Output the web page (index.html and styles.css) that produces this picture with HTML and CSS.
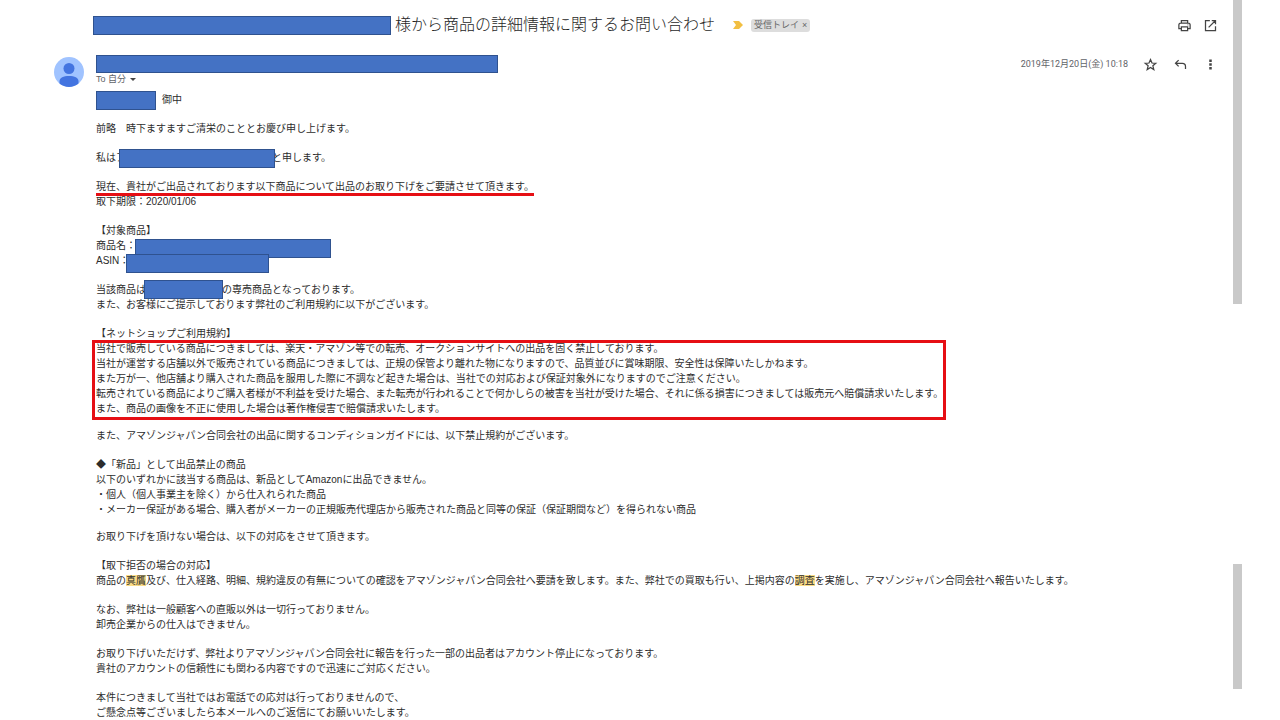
FILE: index.html
```html
<!DOCTYPE html>
<html lang="ja">
<head>
<meta charset="utf-8">
<meta name="viewport" content="width=device-width, initial-scale=1">
<title>商品の詳細情報に関するお問い合わせ</title>
<link rel="stylesheet" href="styles.css">
</head>
<body>
<div class="page">
  <main class="mail">
    <header class="subject">
      <span class="mask mask-subject"></span>
      <h1 class="subject-title">様から商品の詳細情報に関するお問い合わせ</h1>
      <svg class="marker" viewBox="0 0 10 8" aria-hidden="true"><path d="M0 0h6l4 4-4 4H0l3-4z"/></svg>
      <span class="label">受信トレイ <button class="label-close" type="button" aria-label="ラベルを削除">×</button></span>
      <div class="tools">
        <button class="icon" type="button" aria-label="印刷"><svg viewBox="0 0 24 24"><path d="M7 8V4h10v4M7 17H3v-6q0-3 3-3h12q3 0 3 3v6h-4M7 14h10v6H7z"/><path d="M17 11h1"/></svg></button>
        <button class="icon" type="button" aria-label="新しいウィンドウで開く"><svg viewBox="0 0 24 24"><path d="M11 4H4v16h16v-7M14 4h6v6M20 4L9 15"/></svg></button>
      </div>
    </header>

    <section class="sender">
      <svg class="avatar" viewBox="0 0 30 30" aria-hidden="true">
        <circle class="avatar-bg" cx="15" cy="15" r="15"/>
        <circle class="avatar-fg" cx="15" cy="11.500" r="5.500"/>
        <path class="avatar-fg" d="M5.500 26.600v-2.100c0-4 4-5.500 9.500-5.500s9.500 1.500 9.500 5.500v2.100A15 15 0 0 1 5.500 26.600z"/>
      </svg>
      <div class="sender-info">
        <span class="mask mask-sender"></span>
        <button class="recipient" type="button">To 自分 <svg class="caret" viewBox="0 0 6 3" aria-hidden="true"><path d="M0 0h6L3 3z"/></svg></button>
      </div>
      <div class="meta">
        <time datetime="2019-12-20T10:18">2019年12月20日(金) 10:18</time>
        <button class="icon" type="button" aria-label="スター"><svg viewBox="0 0 24 24"><path d="M12 4l2.400 5.600 6.100.5-4.700 4 1.500 6-5.300-3.300-5.300 3.300 1.500-6-4.700-4 6.100-.5z"/></svg></button>
        <button class="icon" type="button" aria-label="返信"><svg viewBox="0 0 24 24"><path d="M9 5L4 10l5 5M4 10h11q5 0 5 5v4"/></svg></button>
        <button class="icon" type="button" aria-label="その他"><svg viewBox="0 0 24 24"><path class="dots" d="M10 4h4v4h-4zM10 10h4v4h-4zM10 16h4v4h-4z"/></svg></button>
      </div>
    </section>

    <article class="body">
      <p><span class="mask mask-company"></span>御中</p>
      <p>前略　時下ますますご清栄のこととお慶び申し上げます。</p>
      <p>私はア<span class="mask mask-name"></span>と申します。</p>
      <p><span class="underlined">現在、貴社がご出品されております以下商品について出品のお取り下げをご要請させて頂きます。</span><br>取下期限：2020/01/06</p>
      <p>【対象商品】<br>商品名：<span class="mask mask-product"></span><br>ASIN：<span class="mask mask-asin"></span></p>
      <p>当該商品は<span class="mask mask-brand"></span>の専売商品となっております。<br>また、お客様にご提示しております弊社のご利用規約に以下がございます。</p>
      <div class="long">
        <h2>【ネットショップご利用規約】</h2>
        <div class="framed">当社で販売している商品につきましては、楽天・アマゾン等での転売、オークションサイトへの出品を固く禁止しております。<br>当社が運営する店舗以外で販売されている商品につきましては、正規の保管より離れた物になりますので、品質並びに賞味期限、安全性は保障いたしかねます。<br>また万が一、他店舗より購入された商品を服用した際に不調など起きた場合は、当社での対応および保証対象外になりますのでご注意ください。<br>転売されている商品によりご購入者様が不利益を受けた場合、また転売が行われることで何かしらの被害を当社が受けた場合、それに係る損害につきましては販売元へ賠償請求いたします。<br>また、商品の画像を不正に使用した場合は著作権侵害で賠償請求いたします。</div>
      </div>
      <p>また、アマゾンジャパン合同会社の出品に関するコンディションガイドには、以下禁止規約がございます。</p>
      <p class="long">◆「新品」として出品禁止の商品<br>以下のいずれかに該当する商品は、新品としてAmazonに出品できません。<br>・個人（個人事業主を除く）から仕入れられた商品<br>・メーカー保証がある場合、購入者がメーカーの正規販売代理店から販売された商品と同等の保証（保証期間など）を得られない商品</p>
      <p>お取り下げを頂けない場合は、以下の対応をさせて頂きます。</p>
      <p>【取下拒否の場合の対応】<br>商品の<mark>真贋</mark>及び、仕入経路、明細、規約違反の有無についての確認をアマゾンジャパン合同会社へ要請を致します。また、弊社での買取も行い、上掲内容の<mark>調査</mark>を実施し、アマゾンジャパン合同会社へ報告いたします。</p>
      <p>なお、弊社は一般顧客への直販以外は一切行っておりません。<br>卸売企業からの仕入はできません。</p>
      <p>お取り下げいただけず、弊社よりアマゾンジャパン合同会社に報告を行った一部の出品者はアカウント停止になっております。<br>貴社のアカウントの信頼性にも関わる内容ですので迅速にご対応ください。</p>
      <p>本件につきまして当社ではお電話での応対は行っておりませんので、<br>ご懸念点等ございましたら本メールへのご返信にてお願いいたします。</p>
    </article>
  </main>
  <div class="rail" aria-hidden="true">
    <span class="thumb thumb-upper"></span>
    <span class="thumb thumb-lower"></span>
  </div>
</div>
</body>
</html>
```
FILE: styles.css
```css
* {
  box-sizing: border-box;
}

body {
  margin: 0;
  background: #fff;
  color: #2c2c2c;
  font-family: "Liberation Sans", "Noto Sans CJK JP", sans-serif;
  font-size: 10px;
  line-height: 15px;
}

button {
  padding: 0;
  border: 0;
  background: none;
  color: inherit;
  font: inherit;
  cursor: pointer;
}

h1, h2, p {
  margin: 0;
  font-size: inherit;
  font-weight: 400;
}

.page {
  display: flex;
  min-height: 100vh;
  padding-right: 38px;
}

.mail {
  flex: 1;
  min-width: 0;
  padding: 15px 15px 0 54px;
}

.mask {
  display: inline-block;
  position: relative;
  height: 19px;
  border: 1px solid #2f528f;
  background: #4472c4;
  vertical-align: top;
}

.subject {
  display: flex;
  align-items: center;
  height: 20px;
  padding-left: 39px;
}

.mask-subject {
  width: 298px;
}

.subject-title {
  margin: 0 18px 0 4px;
  color: #1f1f1f;
  font-size: 16px;
  font-weight: 300;
  line-height: 20px;
}

.marker {
  width: 10px;
  height: 8px;
  margin-right: 8px;
  fill: #f2bf42;
}

.label {
  display: flex;
  align-items: center;
  gap: 3px;
  height: 13px;
  padding: 0 3px;
  border-radius: 3px;
  background: #ddd;
  color: #666;
  font-size: 9px;
  line-height: 13px;
}

.tools {
  display: flex;
  gap: 10px;
  margin-left: auto;
}

.icon {
  display: flex;
  align-items: center;
  justify-content: center;
  width: 16px;
  height: 16px;
}

.icon svg {
  width: 15px;
  height: 15px;
  fill: none;
  stroke: #444;
  stroke-width: 2;
}

.icon .dots {
  fill: #444;
  stroke: none;
}

.sender {
  display: flex;
  align-items: flex-start;
  gap: 12px;
  margin-top: 20px;
  height: 37px;
}

.avatar {
  width: 30px;
  height: 30px;
  margin-top: 2px;
}

.avatar-bg {
  fill: #a0c3ff;
}

.avatar-fg {
  fill: #4374e0;
}

.sender-info {
  display: flex;
  flex-direction: column;
  align-items: flex-start;
}

.mask-sender {
  width: 402px;
  height: 18px;
}

.recipient {
  display: flex;
  align-items: center;
  gap: 4px;
  color: #5f6368;
  font-size: 9px;
  line-height: 13px;
}

.caret {
  width: 6px;
  height: 3px;
  fill: #444;
}

.meta {
  display: flex;
  align-items: center;
  gap: 14px;
  margin-left: auto;
  height: 18px;
  color: #5f6368;
  font-family: Roboto, "Noto Sans CJK JP", sans-serif;
  font-size: 9px;
}

.body {
  display: flex;
  flex-direction: column;
  gap: 14px;
  padding-left: 42px;
}

.long {
  margin-bottom: -2px;
}

.body .mask {
  margin-top: -1px;
  margin-bottom: -3px;
}

.mask-company {
  width: 60px;
  margin-right: 6px;
}

.mask-name {
  width: 156px;
  margin-left: -7px;
  margin-right: -3px;
}

.mask-product {
  width: 196px;
  margin-left: -1px;
}

.mask-asin {
  width: 143px;
  margin-left: -3px;
}

.body .mask-product,
.body .mask-asin {
  margin-top: 1px;
  margin-bottom: -5px;
}

.body .mask-brand {
  width: 79px;
  margin: -2px -1px -2px -2px;
}

.underlined {
  position: relative;
}

.underlined::after {
  content: "";
  position: absolute;
  left: 0;
  right: 0;
  bottom: -4px;
  height: 3px;
  background: #e60f14;
}

.framed {
  position: relative;
  width: fit-content;
}

.framed::after {
  content: "";
  position: absolute;
  inset: -1px -3px -4px -4px;
  border: 3px solid #e60f14;
}

mark {
  background: #fbdc87;
  color: inherit;
}

.rail {
  display: flex;
  flex-direction: column;
  justify-content: space-between;
  width: 9px;
  padding-bottom: 31px;
}

.thumb {
  background: #c9c9c9;
}

.thumb-upper {
  height: 304px;
}

.thumb-lower {
  height: 125px;
}
```
